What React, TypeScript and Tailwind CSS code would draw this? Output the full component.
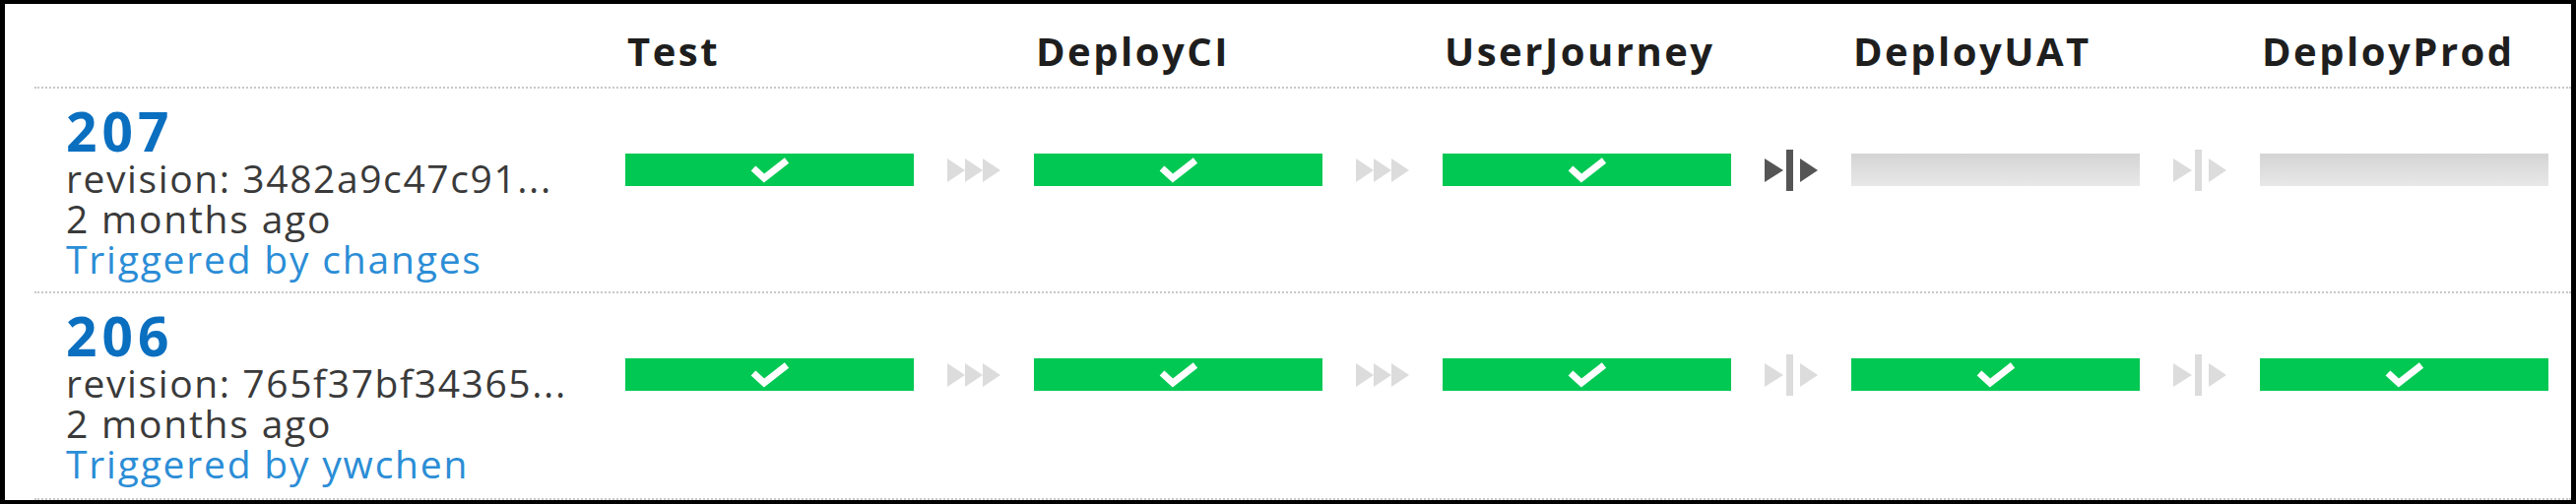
type StageStatus = "passed" | "pending";
type GateKind = "auto" | "manual" | "manualActive";

interface Run {
  counter: number;
  revision: string;
  when: string;
  trigger: string;
  stages: StageStatus[];
  gates: GateKind[];
}

const STAGES = ["Test", "DeployCI", "UserJourney", "DeployUAT", "DeployProd"];

const RUNS: Run[] = [
  {
    counter: 207,
    revision: "revision: 3482a9c47c91...",
    when: "2 months ago",
    trigger: "Triggered by changes",
    stages: ["passed", "passed", "passed", "pending", "pending"],
    gates: ["auto", "auto", "manualActive", "manual"],
  },
  {
    counter: 206,
    revision: "revision: 765f37bf34365...",
    when: "2 months ago",
    trigger: "Triggered by ywchen",
    stages: ["passed", "passed", "passed", "passed", "passed"],
    gates: ["auto", "auto", "manual", "manual"],
  },
];

function Check() {
  return (
    <svg width="44" height="28" viewBox="0 0 44 28">
      <path d="M5 12 L16 22 L39 4" fill="none" stroke="#ffffff" strokeWidth="7" />
    </svg>
  );
}

function AutoArrow() {
  return (
    <svg width="54" height="24" viewBox="0 0 54 24">
      <polygon points="0,0 18,12 0,24" fill="#dcdcdc" />
      <polygon points="18,0 36,12 18,24" fill="#dcdcdc" />
      <polygon points="36,0 54,12 36,24" fill="#dcdcdc" />
    </svg>
  );
}

function ManualGate({ active }: { active: boolean }) {
  const color = active ? "#555555" : "#dcdcdc";
  return (
    <svg width="54" height="42" viewBox="0 0 54 42">
      <polygon points="0,9 19,21 0,33" fill={color} />
      <rect x="22" y="0" width="7" height="42" fill={color} />
      <polygon points="36,9 54,21 36,33" fill={color} />
    </svg>
  );
}

function StageBar({ status }: { status: StageStatus }) {
  if (status === "passed") {
    return (
      <div className="w-[293px] h-[33px] bg-[#00c853] flex items-center justify-center shrink-0">
        <Check />
      </div>
    );
  }
  return <div className="w-[293px] h-[33px] bg-linear-to-b from-[#d4d4d4] to-[#e8e8e8] shrink-0" />;
}

function RunRow({ run, height }: { run: Run; height: string }) {
  return (
    <div className={`flex border-b-2 border-dotted border-[#c8c8c8] ${height}`}>
      <div className="w-[600px] shrink-0 pl-[32px] pt-[16px]">
        <div className="text-[55px] leading-[54px] font-bold text-[#0b6fc0] tracking-[5px]">
          {run.counter}
        </div>
        <div className="text-[39px] leading-[41px] text-[#3a3a3a] tracking-[1.6px] whitespace-nowrap">
          {run.revision}
        </div>
        <div className="text-[39px] leading-[41px] text-[#3a3a3a] tracking-[1.8px] whitespace-nowrap">
          {run.when}
        </div>
        <div className="text-[39px] leading-[41px] text-[#2b8dd6] tracking-[1.8px] whitespace-nowrap">
          {run.trigger}
        </div>
      </div>
      <div className="flex items-start pt-[66px]">
        {run.stages.map((status, i) => (
          <div key={i} className="flex items-start">
            <StageBar status={status} />
            {i < run.gates.length && (
              <div className="w-[122px] h-[33px] flex items-center justify-center shrink-0">
                {run.gates[i] === "auto" ? (
                  <AutoArrow />
                ) : (
                  <ManualGate active={run.gates[i] === "manualActive"} />
                )}
              </div>
            )}
          </div>
        ))}
      </div>
    </div>
  );
}

export default function App() {
  return (
    <div className="w-[2616px] h-[512px] bg-white border-t-4 border-x-[5px] border-b-4 border-black font-['Open_Sans',sans-serif] overflow-hidden">
      <div className="pl-[30px]">
        {/* Stage headers */}
        <div className="flex h-[86px] pt-[28px] border-b-2 border-dotted border-[#c8c8c8]">
          <div className="w-[600px] shrink-0" />
          {STAGES.map((name, i) => (
            <div
              key={name}
              className={`${i < STAGES.length - 1 ? "w-[415px]" : "w-[293px]"} shrink-0 pl-[2px] text-[40px] leading-[40px] font-bold text-[#1e1e1e] tracking-[2.5px]`}
            >
              {name}
            </div>
          ))}
        </div>

        <RunRow run={RUNS[0]} height="h-[208px]" />
        <RunRow run={RUNS[1]} height="h-[210px]" />
      </div>
    </div>
  );
}
